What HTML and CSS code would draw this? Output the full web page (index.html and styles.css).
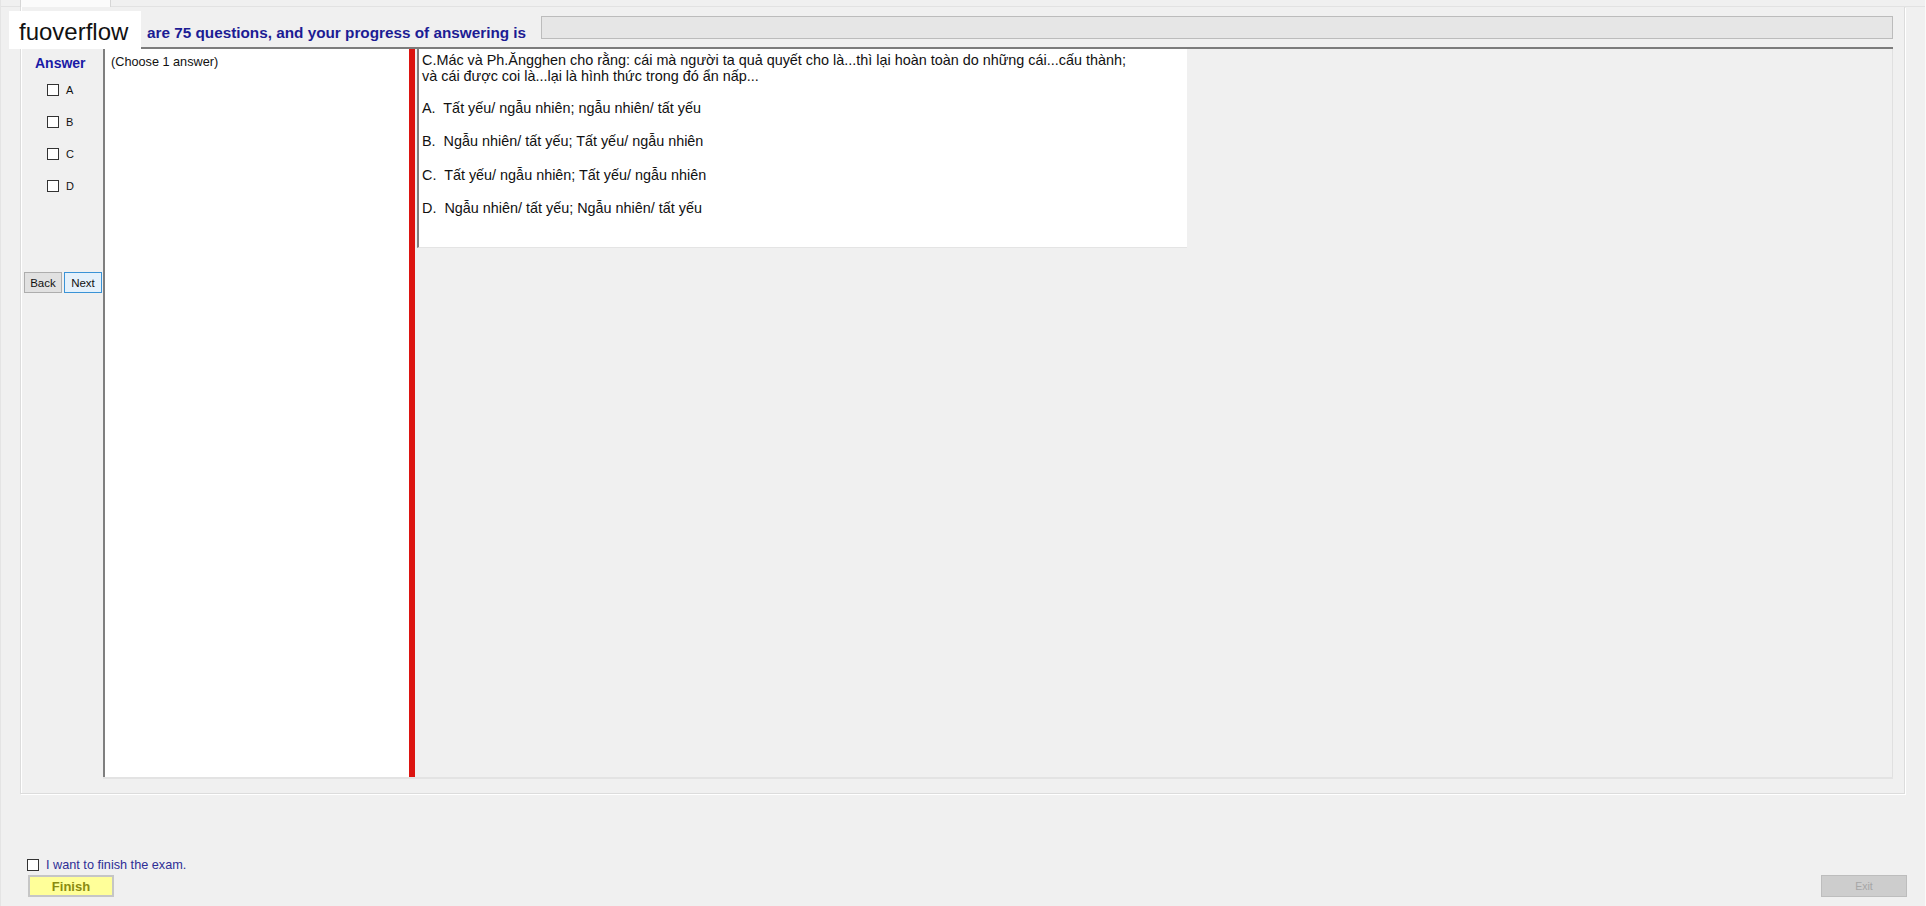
FILE: index.html
```html
<!DOCTYPE html>
<html lang="vi">
<head>
<meta charset="utf-8">
<title>Exam</title>
<link rel="stylesheet" href="styles.css">
</head>
<body>
<div class="app">
  <div class="tabstrip"><div class="tab"></div></div>
  <div class="groupbox">
    <div class="header">
      <div class="header-text">are 75 questions, and your progress of answering is</div>
      <div class="progress"></div>
    </div>
    <div class="content">
      <div class="answer-col">
        <div class="answer-title">Answer</div>
        <label class="opt"><span class="cb"></span><span class="opt-label">A</span></label>
        <label class="opt"><span class="cb"></span><span class="opt-label">B</span></label>
        <label class="opt"><span class="cb"></span><span class="opt-label">C</span></label>
        <label class="opt"><span class="cb"></span><span class="opt-label">D</span></label>
        <div class="nav">
          <button class="btn btn-back">Back</button>
          <button class="btn btn-next">Next</button>
        </div>
      </div>
      <div class="main-pane">
        <div class="choose-panel">(Choose 1 answer)</div>
        <div class="redbar"></div>
        <div class="right-pane">
          <div class="question">
            <p class="q-line">C.Mác và Ph.Ăngghen cho rằng: cái mà người ta quả quyết cho là...thì lại hoàn toàn do những cái...cấu thành;<br>và cái được coi là...lại là hình thức trong đó ẩn nấp...</p>
            <p class="q-opt">A.&nbsp; Tất yếu/ ngẫu nhiên; ngẫu nhiên/ tất yếu</p>
            <p class="q-opt">B.&nbsp; Ngẫu nhiên/ tất yếu; Tất yếu/ ngẫu nhiên</p>
            <p class="q-opt">C.&nbsp; Tất yếu/ ngẫu nhiên; Tất yếu/ ngẫu nhiên</p>
            <p class="q-opt">D.&nbsp; Ngẫu nhiên/ tất yếu; Ngẫu nhiên/ tất yếu</p>
          </div>
        </div>
      </div>
    </div>
  </div>
  <div class="footer">
    <label class="finish-check"><span class="cb"></span><span class="finish-label">I want to finish the exam.</span></label>
    <div class="footer-buttons">
      <button class="btn-finish">Finish</button>
      <button class="btn-exit">Exit</button>
    </div>
  </div>
  <div class="watermark">fuoverflow</div>
</div>
</body>
</html>
```
FILE: styles.css
```css
* { box-sizing: border-box; }
html, body { margin: 0; padding: 0; }
body {
  background: #f0f0f0;
  font-family: "Liberation Sans", Arial, sans-serif;
  color: #000;
}
.app {
  position: relative;
  width: 1926px;
  height: 906px;
  overflow: hidden;
  border-left: 1px solid #e4e4e4;
  border-right: 1px solid #fafafa;
}
.tabstrip {
  height: 7px;
  padding-left: 19px;
  border-bottom: 1px solid #e2e2e2;
}
.tab {
  width: 91px;
  height: 7px;
  background: #fbfbfb;
  border: 1px solid #d6d6d6;
  border-top: none;
  border-bottom: none;
}
.groupbox {
  margin: 0 20px 0 19px;
  height: 787px;
  border: 1px solid #dcdcdc;
  border-top: none;
  box-shadow: 1px 1px 0 #ffffff, inset 1px 0 0 #ffffff;
  display: flex;
  flex-direction: column;
}
.header {
  height: 40px;
  display: flex;
  align-items: flex-start;
  padding-left: 126px;
  padding-right: 11px;
}
.header-text {
  font-weight: bold;
  font-size: 15.3px;
  color: #1c1c94;
  margin-top: 17px;
  white-space: nowrap;
}
.progress {
  flex: 1;
  margin-left: 15px;
  margin-top: 9px;
  height: 23px;
  background: #e6e6e6;
  border: 1px solid #bcbcbc;
}
.content {
  display: flex;
  height: 732px;
  padding-right: 11px;
}
.answer-col {
  width: 82px;
  display: flex;
  flex-direction: column;
}
.answer-title {
  font-weight: bold;
  font-size: 14px;
  line-height: 16px;
  color: #1a1aa6;
  padding-left: 14px;
  margin-top: 8px;
}
.opt {
  height: 32px;
  display: flex;
  align-items: center;
  padding-left: 26px;
  font-size: 11px;
}
.answer-title + .opt { margin-top: 3px; }
.cb {
  display: inline-block;
  width: 12px;
  height: 12px;
  background: #fff;
  border: 1px solid #333;
}
.opt-label { margin-left: 7px; color: #111; }
.nav {
  margin-top: 70px;
  display: flex;
  gap: 2px;
  padding-left: 3px;
}
.btn {
  width: 38px;
  height: 21px;
  padding: 0;
  font-family: "Liberation Sans", Arial, sans-serif;
  font-size: 11.5px;
  color: #111;
}
.btn-back { background: #e1e1e1; border: 1px solid #adadad; }
.btn-next { background: #e5f1fb; border: 1px solid #3a93d6; }
.main-pane {
  flex: 1;
  display: flex;
  border-top: 2px solid #7c7c7c;
  border-bottom: 2px solid #e3e3e3;
}
.choose-panel {
  width: 306px;
  background: #fff;
  border-left: 2px solid #7f7f7f;
  padding: 6px 0 0 6px;
  font-size: 12.7px;
  line-height: 14px;
  color: #111;
}
.redbar {
  width: 6px;
  background: #dc1410;
}
.right-pane {
  flex: 1;
  padding-left: 2px;
  border-right: 1px solid #e0e0e0;
  background: #f0f0f0;
}
.question {
  width: 770px;
  height: 199px;
  background: #fff;
  border-left: 2px solid #808080;
  border-bottom: 1px solid #e4e4e4;
  padding: 3px 0 0 3px;
  font-size: 14.4px;
  line-height: 16px;
  color: #111;
}
.question p { margin: 0; }
.q-opt { margin-top: 17.3px !important; }
.q-line + .q-opt { margin-top: 16px !important; }
.footer {
  padding-top: 63px;
}
.finish-check {
  display: flex;
  align-items: center;
  height: 16px;
  padding-left: 26px;
}
.finish-label {
  margin-left: 7px;
  font-size: 12.7px;
  color: #2e2e96;
}
.footer-buttons {
  margin-top: 2px;
  display: flex;
  justify-content: space-between;
  padding-left: 27px;
  padding-right: 18px;
}
.btn-finish {
  width: 86px;
  height: 22px;
  background: #ffff99;
  border: 2px solid #c6c6c6;
  font-family: "Liberation Sans", Arial, sans-serif;
  font-weight: bold;
  font-size: 13px;
  color: #8a8a10;
  padding: 0;
}
.btn-exit {
  width: 86px;
  height: 22px;
  background: #cdcdcd;
  border: 1px solid #bdbdbd;
  font-family: "Liberation Sans", Arial, sans-serif;
  font-size: 10.5px;
  color: #a6a6a6;
  padding: 0;
}
.watermark {
  position: absolute;
  left: 8px;
  top: 11px;
  width: 132px;
  height: 38px;
  background: #fff;
  padding: 7px 0 0 10px;
  font-size: 24px;
  line-height: 28px;
  color: #111;
}
```
